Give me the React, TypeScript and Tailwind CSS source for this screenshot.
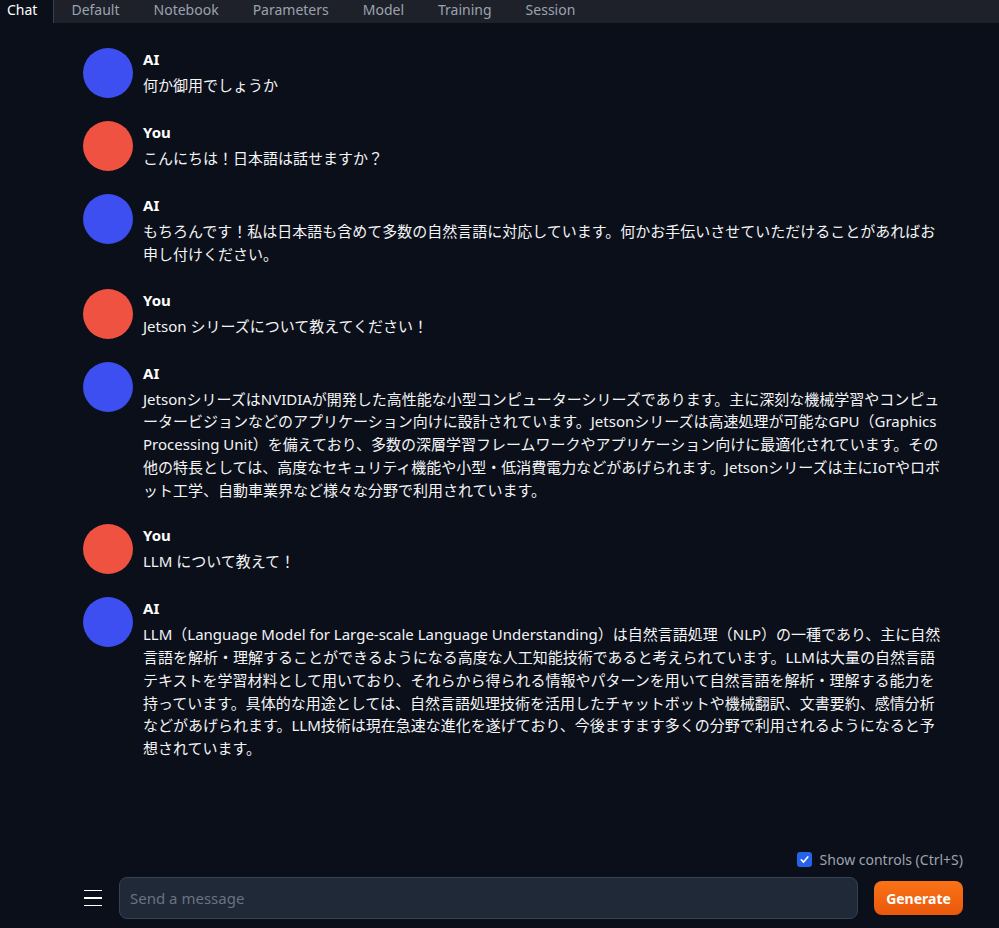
import React from 'react';

interface Message {
  role: 'ai' | 'user';
  text: string;
}

const tabs = ['Chat', 'Default', 'Notebook', 'Parameters', 'Model', 'Training', 'Session'];

const messages: Message[] = [
  { role: 'ai', text: '何か御用でしょうか' },
  { role: 'user', text: 'こんにちは！日本語は話せますか？' },
  {
    role: 'ai',
    text: 'もちろんです！私は日本語も含めて多数の自然言語に対応しています。何かお手伝いさせていただけることがあればお申し付けください。',
  },
  { role: 'user', text: 'Jetson シリーズについて教えてください！' },
  {
    role: 'ai',
    text: 'JetsonシリーズはNVIDIAが開発した高性能な小型コンピューターシリーズであります。主に深刻な機械学習やコンピュータービジョンなどのアプリケーション向けに設計されています。Jetsonシリーズは高速処理が可能なGPU（Graphics Processing Unit）を備えており、多数の深層学習フレームワークやアプリケーション向けに最適化されています。その他の特長としては、高度なセキュリティ機能や小型・低消費電力などがあげられます。Jetsonシリーズは主にIoTやロボット工学、自動車業界など様々な分野で利用されています。',
  },
  { role: 'user', text: 'LLM について教えて！' },
  {
    role: 'ai',
    text: 'LLM（Language Model for Large-scale Language Understanding）は自然言語処理（NLP）の一種であり、主に自然言語を解析・理解することができるようになる高度な人工知能技術であると考えられています。LLMは大量の自然言語テキストを学習材料として用いており、それらから得られる情報やパターンを用いて自然言語を解析・理解する能力を持っています。具体的な用途としては、自然言語処理技術を活用したチャットボットや機械翻訳、文書要約、感情分析などがあげられます。LLM技術は現在急速な進化を遂げており、今後ますます多くの分野で利用されるようになると予想されています。',
  },
];

const ChatMessage = ({ message }: { message: Message }) => {
  const isAi = message.role === 'ai';
  return (
    <div className="flex gap-[10px] mb-[23px]">
      <div
        className={`w-[50px] h-[50px] rounded-full shrink-0 ${isAi ? 'bg-[#3d4ff0]' : 'bg-[#f05241]'}`}
      />
      <div className="w-[800px]">
        <div className="font-bold text-white leading-[22px]">{isAi ? 'AI' : 'You'}</div>
        <p className="mt-[4px] text-[#f3f4f6] leading-[22.75px]">{message.text}</p>
      </div>
    </div>
  );
};

export default function App() {
  return (
    <div
      className="h-[928px] w-full bg-[#0b0f19] flex flex-col text-[15px] overflow-hidden"
      style={{ fontFamily: '"Noto Sans", "Noto Sans CJK JP", sans-serif' }}
    >
      <div className="h-[23px] bg-[#1e212a] flex text-[14px] leading-[20px] shrink-0">
        {tabs.map((tab, i) =>
          i === 0 ? (
            <div key={tab} className="bg-[#0b0f19] text-white pl-[7px] pr-[16px] border-r border-[#374151]">
              {tab}
            </div>
          ) : (
            <div key={tab} className="px-[17px] text-[#9ca3af]">
              {tab}
            </div>
          )
        )}
      </div>

      <div className="flex-1 pl-[83px] pt-[25px]">
        {messages.map((m, i) => (
          <ChatMessage key={i} message={m} />
        ))}
      </div>

      <div className="shrink-0 pb-[9px]">
        <div className="flex justify-end items-center gap-2 pr-[36px] mb-[7px]">
          <span className="w-[15px] h-[15px] rounded-[3px] bg-[#2563eb] flex items-center justify-center">
            <svg width="11" height="11" viewBox="0 0 12 12" fill="none">
              <path d="M2.5 6.3 L5 8.8 L9.6 3.2" stroke="white" strokeWidth="1.8" strokeLinecap="round" strokeLinejoin="round" />
            </svg>
          </span>
          <span className="text-[14px] text-[#9ca3af]">Show controls (Ctrl+S)</span>
        </div>
        <div className="flex items-center pl-[84px] pr-[36px]">
          <div className="w-[18px] flex flex-col gap-[6px] mr-[17px]">
            <div className="h-[1.5px] bg-white" />
            <div className="h-[1.5px] bg-white" />
            <div className="h-[1.5px] bg-white" />
          </div>
          <div className="flex-1 h-[42px] bg-[#1f2937] border border-[#374151] rounded-lg flex items-center pl-[10px] text-[#6b7280]">
            Send a message
          </div>
          <button className="ml-[16px] w-[89px] h-[34px] rounded-lg bg-gradient-to-b from-[#f97316] to-[#ea580c] text-white font-bold text-[14px]">
            Generate
          </button>
        </div>
      </div>
    </div>
  );
}
